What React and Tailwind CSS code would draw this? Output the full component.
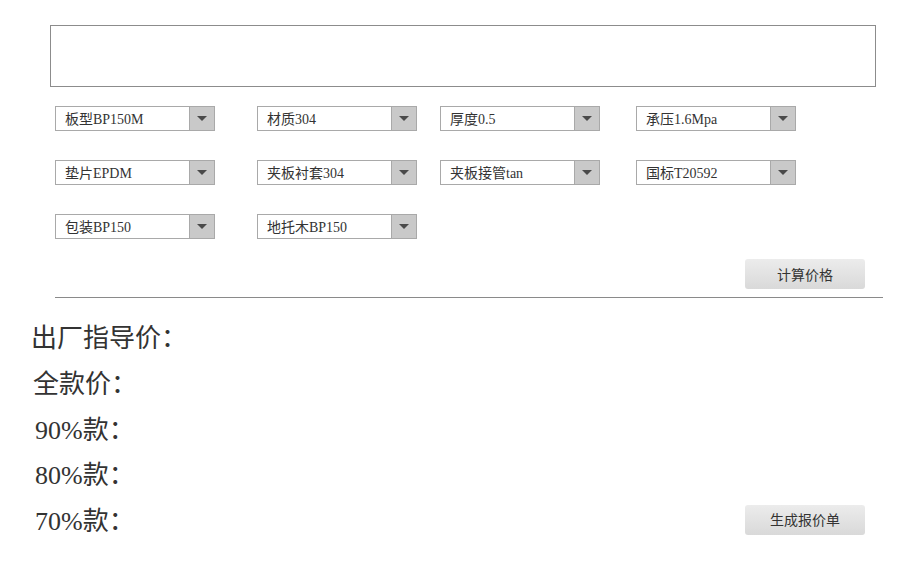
import React from "react";

const serif = { fontFamily: '"Liberation Serif", "Noto Sans CJK SC", serif' };

function Select({ label }) {
  return (
    <div className="flex h-[25px] w-[160px] border border-[#a9a9a9] bg-white">
      <div className="flex flex-1 items-center pl-[9px] pt-px text-[14px] text-[#333]" style={serif}>
        {label}
      </div>
      <div className="flex w-[25px] items-center justify-center border-l border-[#a9a9a9] bg-[#c9c9c9]">
        <svg width="10" height="5" viewBox="0 0 10 5">
          <path d="M0 0 L10 0 L5 5 Z" fill="#4a4a4a" />
        </svg>
      </div>
    </div>
  );
}

function Button({ children }) {
  return (
    <button className="h-[30px] w-[120px] rounded-[3px] bg-gradient-to-b from-[#ececec] to-[#d9d9d9] text-[14px] text-[#333]"
      style={{ fontFamily: '"Noto Sans CJK SC", sans-serif' }}>
      {children}
    </button>
  );
}

export default function App() {
  const rows = [
    ["板型BP150M", "材质304", "厚度0.5", "承压1.6Mpa"],
    ["垫片EPDM", "夹板衬套304", "夹板接管tan", "国标T20592"],
    ["包装BP150", "地托木BP150"],
  ];

  return (
    <div className="h-[561px] w-[908px] bg-white" style={serif}>
      <div className="pl-[50px] pt-[25px]">
        <div className="h-[62px] w-[826px] border border-[#8c8c8c]" />
      </div>

      <div className="mt-[19px] flex flex-col gap-[29px] pl-[55px]">
        {rows.map((r, i) => (
          <div key={i} className="grid grid-cols-[202px_183px_196px_160px]">
            {r.map((l) => (
              <Select key={l} label={l} />
            ))}
          </div>
        ))}
      </div>

      <div className="mt-[20px] flex justify-end pr-[43px]">
        <Button>计算价格</Button>
      </div>

      <div className="ml-[55px] mt-[8px] h-px w-[828px] bg-[#8a8a8a]" />

      <div className="mt-[18px] flex items-end justify-between pr-[43px]">
        <div className="flex flex-col text-[26px] leading-[45.75px] text-[#333]">
          <div className="ml-[31px]">出厂指导价：</div>
          <div className="ml-[33px]">全款价：</div>
          <div className="ml-[35px]">90%款：</div>
          <div className="ml-[35px]">80%款：</div>
          <div className="ml-[35px]">70%款：</div>
        </div>
        <div className="mb-[10px]">
          <Button>生成报价单</Button>
        </div>
      </div>
    </div>
  );
}
